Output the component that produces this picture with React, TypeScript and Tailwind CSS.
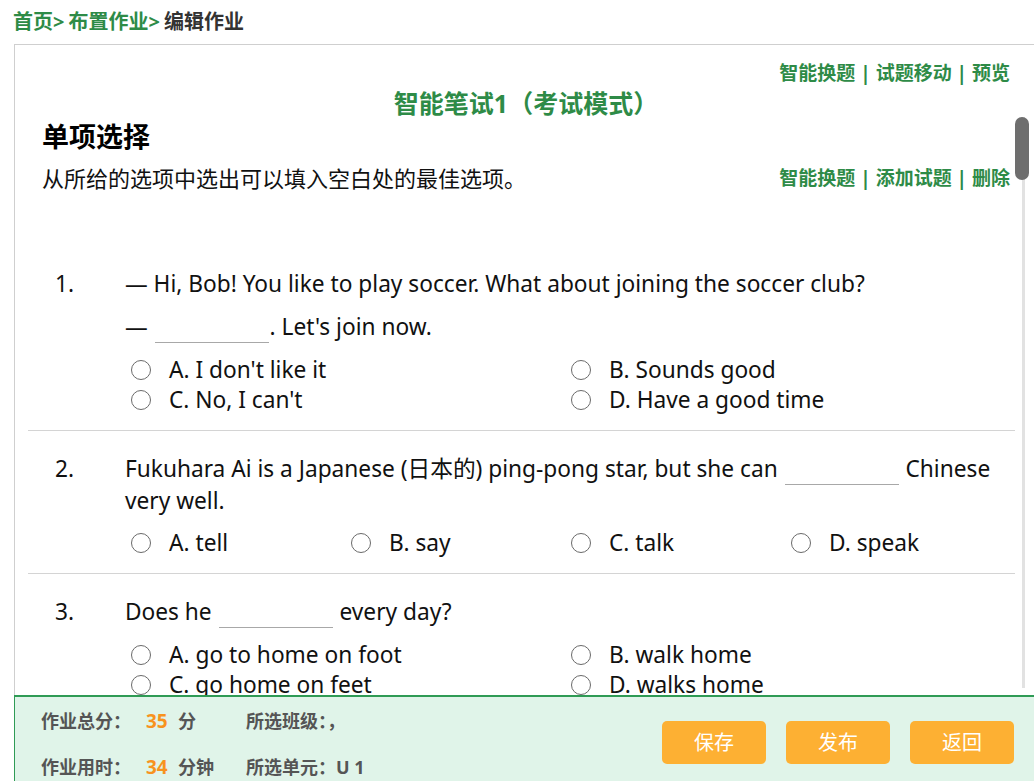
type Opt = string;

interface Question {
  no: number;
  lines: React.ReactNode[];
  cols: 2 | 4;
  options: Opt[];
}

function Blank() {
  return <span className="inline-block w-[114px] border-b border-[#a8a8a8] align-[-8px] mx-[1px]" />;
}

const questions: Question[] = [
  {
    no: 1,
    lines: [
      <>— Hi, Bob! You like to play soccer. What about joining the soccer club?</>,
      <>— <Blank />. Let's join now.</>,
    ],
    cols: 2,
    options: ["A. I don't like it", "B. Sounds good", "C. No, I can't", "D. Have a good time"],
  },
  {
    no: 2,
    lines: [
      <>
        Fukuhara Ai is a Japanese (日本的) ping-pong star, but she can <Blank /> Chinese very well.
      </>,
    ],
    cols: 4,
    options: ["A. tell", "B. say", "C. talk", "D. speak"],
  },
  {
    no: 3,
    lines: [
      <>
        Does he <Blank /> every day?
      </>,
    ],
    cols: 2,
    options: ["A. go to home on foot", "B. walk home", "C. go home on feet", "D. walks home"],
  },
  {
    no: 4,
    lines: [<>My father often goes to work <Blank /> bus.</>],
    cols: 4,
    options: ["A. in", "B. by", "C. on", "D. take"],
  },
];

function Radio() {
  return <span className="w-[20px] h-[20px] rounded-full border border-[#6a6a6a] bg-white shrink-0" />;
}

function QuestionItem({ q, first }: { q: Question; first?: boolean }) {
  return (
    <div className={`flex pb-[15px] ${first ? "pt-[0px]" : "pt-[22px] border-t border-[#d4d4d4]"}`}>
      <div className="w-[97px] pl-[27px] text-[22.7px] leading-[31px] text-[#111]">{q.no}.</div>
      <div className="flex-1 pr-[4px]">
        {q.lines.map((l, i) => (
          <p key={i} className={`text-[22.7px] leading-[31px] text-[#111] ${i > 0 ? "mt-[12px]" : ""}`}>
            {l}
          </p>
        ))}
        <div className={`mt-[12px] ml-[6px] grid ${q.cols === 4 ? "grid-cols-[220px_220px_220px_220px]" : "grid-cols-[440px_440px]"}`}>
          {q.options.map((o) => (
            <label key={o} className="flex items-center h-[30px] gap-[18px] text-[22.7px] text-[#111]">
              <Radio />
              <span>{o}</span>
            </label>
          ))}
        </div>
      </div>
    </div>
  );
}

export default function App() {
  return (
    <div className="h-screen flex flex-col bg-white overflow-hidden font-['Noto_Sans','Noto_Sans_CJK_SC',sans-serif]">
      {/* breadcrumb */}
      <div className="h-[44px] shrink-0 flex items-center pl-[13px] text-[20px] font-bold">
        <span className="text-[#2e8b47]">首页&gt;</span>
        <span className="text-[#2e8b47] ml-[4px]">布置作业&gt;</span>
        <span className="text-[#333] ml-[4px]">编辑作业</span>
      </div>

      <div className="flex-1 min-h-0 ml-[14px] border-l border-t border-[#cfcfcf] relative overflow-hidden">
        <div className="pl-[27px] pr-[24px] pt-[15px]">
          <div className="text-right text-[19px] font-bold text-[#2e8b47] leading-[26px]">
            智能换题 | 试题移动 | 预览
          </div>
          <div className="text-center text-[25px] font-bold text-[#2e8b47] leading-[32px] mt-[1px]">
            智能笔试1（考试模式）
          </div>
          <div className="text-[27px] font-bold text-black leading-[34px] mt-[1px]">单项选择</div>
          <div className="flex justify-between items-center mt-[10px] leading-[28px]">
            <span className="text-[22px] text-[#111]">从所给的选项中选出可以填入空白处的最佳选项。</span>
            <span className="text-[19px] font-bold text-[#2e8b47]">智能换题 | 添加试题 | 删除</span>
          </div>
        </div>

        <div className="ml-[13px] mr-[19px] mt-[76px]">
          {questions.map((q, i) => (
            <QuestionItem key={q.no} q={q} first={i === 0} />
          ))}
        </div>

        {/* scrollbar */}
        <div className="absolute right-[9px] top-[72px] w-[3px] h-[571px] bg-[#e2e2e2]" />
        <div className="absolute right-[5px] top-[72px] w-[14px] h-[63px] rounded-full bg-[#6e6e6e]" />
      </div>

      <footer className="h-[86px] shrink-0 ml-[14px] border-l border-t-2 border-[#2f9b55] bg-[#e0f4e9] flex justify-between">
        <div className="pl-[26px] pt-[11px] text-[18px] font-bold text-[#555]">
          <div className="flex items-center h-[26px]">
            <span className="w-[105px]">作业总分：</span>
            <span className="w-[32px] text-[19px] text-[#f7931e]">35</span>
            <span className="w-[68px]">分</span>
            <span>所选班级：，</span>
          </div>
          <div className="flex items-center h-[26px] mt-[20px]">
            <span className="w-[105px]">作业用时：</span>
            <span className="w-[32px] text-[19px] text-[#f7931e]">34</span>
            <span className="w-[68px]">分钟</span>
            <span>所选单元：U 1</span>
          </div>
        </div>
        <div className="flex gap-[20px] pr-[20px] pt-[24px]">
          {["保存", "发布", "返回"].map((b) => (
            <button
              key={b}
              className="w-[104px] h-[43px] rounded-[5px] bg-[#fdb033] text-white text-[20px]"
            >
              {b}
            </button>
          ))}
        </div>
      </footer>
    </div>
  );
}
